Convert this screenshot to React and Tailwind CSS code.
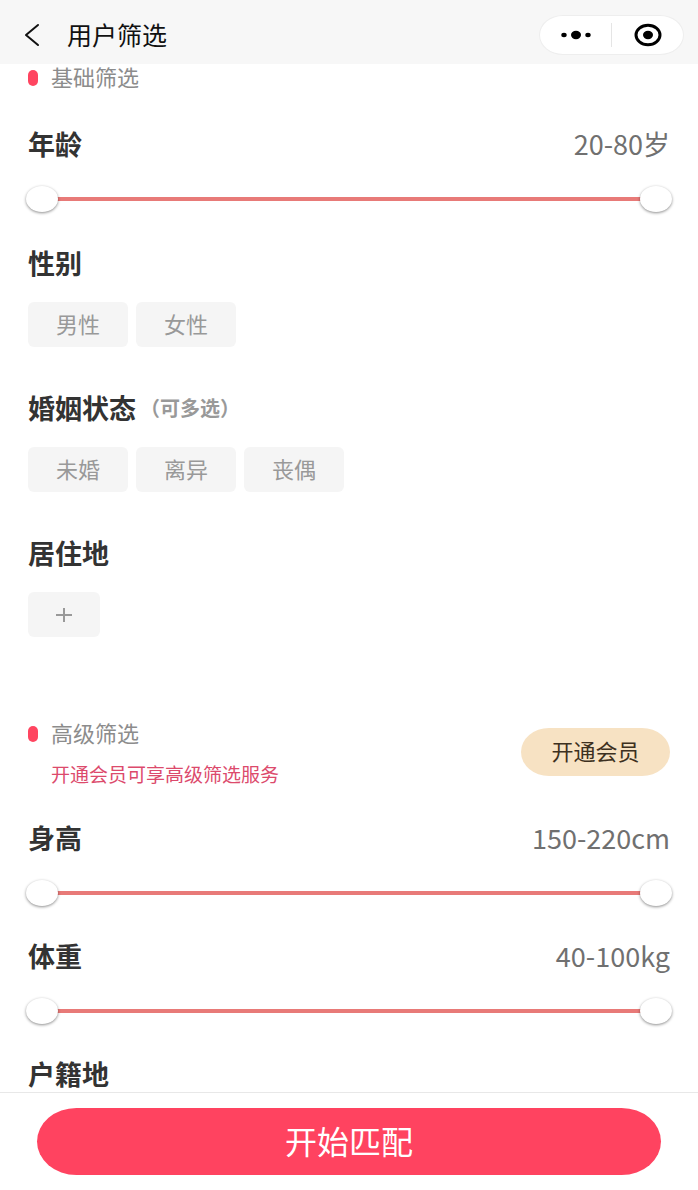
// Match filter page: basic filters, member-only filters, start button
import { useState } from 'react';

const GENDERS = ['男性', '女性'];
const MARITAL = ['未婚', '离异', '丧偶'];

const SectionLabel = ({ children }) => (
  <div className="flex items-start gap-[13px] h-7">
    <span className="w-[10px] h-4 mt-[6px] rounded-[5px] bg-[#ff4560]" />
    <h2 className="text-[22px] leading-6 text-[#8c8c8c]">{children}</h2>
  </div>
);

const Heading = ({ children }) => (
  <h3 className="text-[27px] leading-9 font-bold text-[#333]">{children}</h3>
);

const Chip = ({ active, onClick, children }) => (
  <button
    type="button"
    aria-pressed={active}
    onClick={onClick}
    className={`w-[100px] h-[45px] pb-1 rounded-md text-[22px] leading-7 ${active ? 'bg-[#ffe3e7] text-[#ff4560]' : 'bg-[#f5f5f5] text-[#999]'}`}
  >
    {children}
  </button>
);

const THUMB =
  'absolute inset-0 w-full h-[26px] appearance-none bg-transparent pointer-events-none outline-none ' +
  '[&::-webkit-slider-thumb]:appearance-none [&::-webkit-slider-thumb]:pointer-events-auto [&::-webkit-slider-thumb]:w-8 [&::-webkit-slider-thumb]:h-[26px] ' +
  '[&::-webkit-slider-thumb]:rounded-[50%] [&::-webkit-slider-thumb]:bg-white [&::-webkit-slider-thumb]:shadow-[0_1px_3px_rgba(0,0,0,0.45)]';

const RangeFilter = ({ label, unit, min, max }) => {
  const [low, setLow] = useState(min);
  const [high, setHigh] = useState(max);
  const left = ((low - min) / (max - min)) * 100;
  const right = ((max - high) / (max - min)) * 100;

  return (
    <div>
      <div className="flex items-center justify-between">
        <Heading>{label}</Heading>
        <span className="text-[27px] leading-9 text-[#707070]">{low}-{high}{unit}</span>
      </div>
      <div className="relative h-[26px] mt-6 -mx-[2px]">
        <div className="absolute inset-x-4 top-[11px] h-1 bg-[#eee]">
          <div className="absolute inset-y-0 bg-[#e87a78]" style={{ left: `${left}%`, right: `${right}%` }} />
        </div>
        <input
          type="range"
          aria-label={`${label} 最小`}
          className={THUMB}
          min={min}
          max={max}
          value={low}
          onChange={(e) => setLow(Math.min(Number(e.target.value), high))}
        />
        <input
          type="range"
          aria-label={`${label} 最大`}
          className={THUMB}
          min={min}
          max={max}
          value={high}
          onChange={(e) => setHigh(Math.max(Number(e.target.value), low))}
        />
      </div>
    </div>
  );
};

const NavBar = () => (
  <header className="flex items-center h-16 shrink-0 pl-6 pr-[14px] pt-[5px] bg-[#f7f7f7]">
    <button type="button" aria-label="返回" className="w-4 h-6">
      <svg viewBox="0 0 16 24" className="w-4 h-6" fill="none" stroke="#111" strokeWidth="2" strokeLinecap="round" strokeLinejoin="round">
        <path d="M14 2 2 12l12 10" />
      </svg>
    </button>
    <h1 className="ml-[27px] pb-[2px] text-[25px] leading-8 text-[#111]">用户筛选</h1>
    <div className="ml-auto flex items-center w-[145px] h-10 rounded-[24px/20px] border border-[#eee] bg-white">
      <button type="button" aria-label="更多" className="flex-1 flex justify-center">
        <svg viewBox="0 0 30 10" className="w-[30px] h-[10px]" fill="#000">
          <ellipse cx="3" cy="5" rx="2.7" ry="2.2" />
          <ellipse cx="15" cy="5" rx="5" ry="4.2" />
          <ellipse cx="27" cy="5" rx="2.7" ry="2.2" />
        </svg>
      </button>
      <span className="w-px h-6 bg-[#e5e5e5]" />
      <button type="button" aria-label="关闭" className="flex-1 flex justify-center">
        <svg viewBox="0 0 28 24" className="w-7 h-6" fill="#000">
          <ellipse cx="14" cy="12" rx="12" ry="9.7" fill="none" stroke="#000" strokeWidth="3" />
          <ellipse cx="14" cy="12" rx="5" ry="4.2" />
        </svg>
      </button>
    </div>
  </header>
);

export default function App() {
  const [gender, setGender] = useState(null);
  const [marital, setMarital] = useState([]);

  const toggleMarital = (m) =>
    setMarital((prev) => (prev.includes(m) ? prev.filter((x) => x !== m) : [...prev, m]));

  return (
    <div className="flex flex-col min-h-screen bg-white font-['Noto_Sans_CJK_SC',sans-serif]">
      <NavBar />

      <main className="flex-1 px-7">
        <SectionLabel>基础筛选</SectionLabel>

        <div className="mt-[34px]">
          <RangeFilter label="年龄" unit="岁" min={20} max={80} />
        </div>

        <div className="mt-[33px]">
          <Heading>性别</Heading>
          <div className="flex gap-2 mt-[21px]">
            {GENDERS.map((g) => (
              <Chip key={g} active={gender === g} onClick={() => setGender(g)}>{g}</Chip>
            ))}
          </div>
        </div>

        <div className="mt-[43px]">
          <div className="flex items-center gap-1">
            <Heading>婚姻状态</Heading>
            <span className="text-[20px] leading-9 font-bold text-[#999]">（可多选）</span>
          </div>
          <div className="flex gap-2 mt-[21px]">
            {MARITAL.map((m) => (
              <Chip key={m} active={marital.includes(m)} onClick={() => toggleMarital(m)}>{m}</Chip>
            ))}
          </div>
        </div>

        <div className="mt-[43px]">
          <Heading>居住地</Heading>
          <button type="button" aria-label="添加居住地" className="flex items-center justify-center mt-[21px] w-[72px] h-[45px] rounded-md bg-[#f5f5f5]">
            <svg viewBox="0 0 16 14" className="w-4 h-[14px]" stroke="#999" strokeWidth="2">
              <path d="M0 7h16M8 0v14" />
            </svg>
          </button>
        </div>

        <div className="flex items-start justify-between mt-[83px]">
          <div>
            <SectionLabel>高级筛选</SectionLabel>
            <p className="mt-3 ml-[23px] text-[19px] leading-7 text-[#dc4a6c]">开通会员可享高级筛选服务</p>
          </div>
          <button type="button" className="w-[149px] h-12 mt-2 pb-1 rounded-[28px/24px] bg-[#f7e2c3] text-[22px] leading-7 text-[#3d3020]">开通会员</button>
        </div>

        <div className="mt-8">
          <RangeFilter label="身高" unit="cm" min={150} max={220} />
        </div>
        <div className="mt-8">
          <RangeFilter label="体重" unit="kg" min={40} max={100} />
        </div>
        <div className="mt-8">
          <Heading>户籍地</Heading>
        </div>
      </main>

      <footer className="sticky bottom-0 shrink-0 px-[37px] py-[15px] border-t border-[#e8e8e8] bg-white">
        <button type="button" className="w-full h-[67px] pb-1 rounded-[40px/34px] bg-[#ff4360] text-[32px] leading-10 text-white">开始匹配</button>
      </footer>
    </div>
  );
}
